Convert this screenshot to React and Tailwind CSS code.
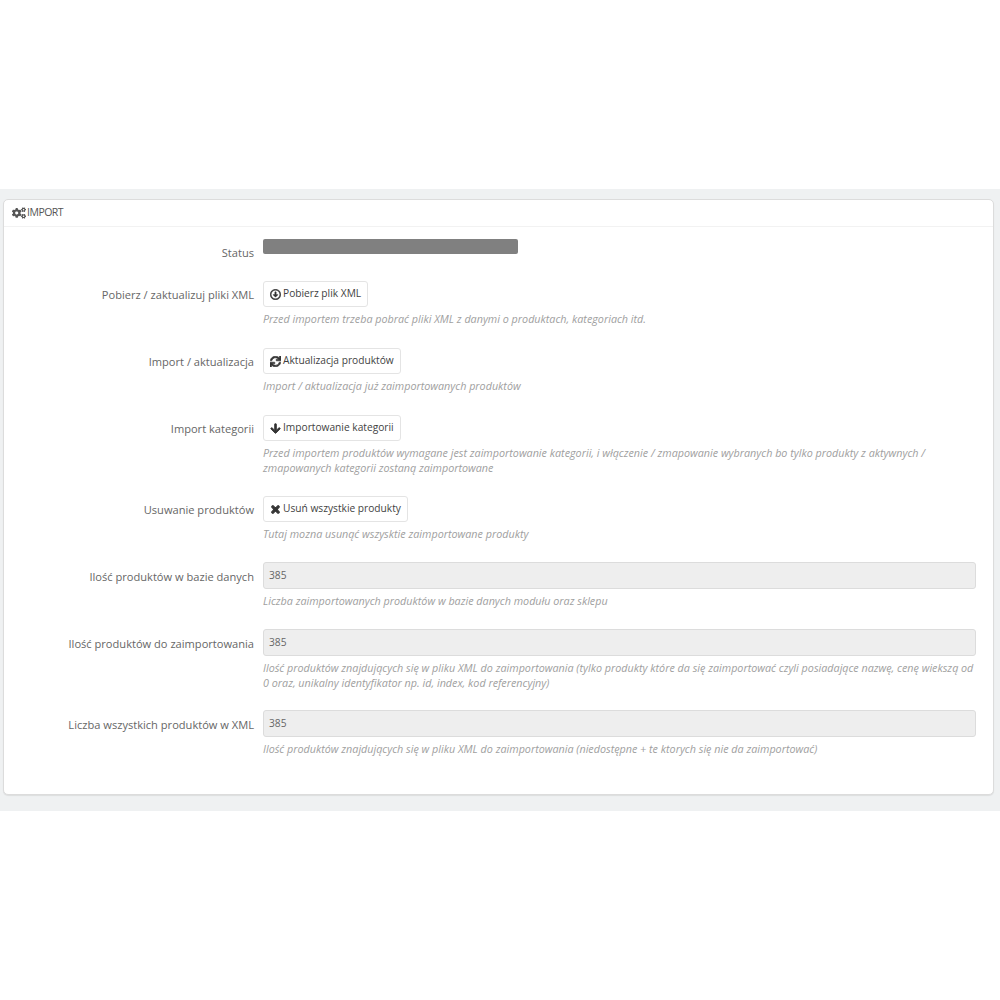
import { FaCogs, FaRegArrowAltCircleDown, FaSync, FaArrowDown, FaTimes } from 'react-icons/fa';

function Row({ label, labelClass = '', help, className = '', children }) {
  return (
    <div className={`flex ${className}`}>
      <label className={`w-[250px] shrink-0 text-right text-[11.1px] leading-[16px] text-[#666] ${labelClass}`}>{label}</label>
      <div className="ml-[9px] flex-1">
        {children}
        {help && <p className="mt-[4px] text-[10.78px] leading-[15px] italic text-[#a0a0a0]">{help}</p>}
      </div>
    </div>
  );
}

function ActionButton({ icon, children }) {
  return (
    <button className="flex h-[26px] items-center gap-[2px] rounded-[3px] border border-[#e4e4e4] bg-white px-[6px] text-[10.2px] text-[#3f3f3f]">
      {icon}
      {children}
    </button>
  );
}

function ReadonlyInput() {
  return (
    <div className="flex h-[27px] items-center rounded-[3px] border border-[#dcdcdc] bg-[#eeeeee] px-[5px] text-[10.2px] text-[#666]">
      385
    </div>
  );
}

export default function App() {
  return (
    <div className="min-h-screen bg-white pt-[189px] font-['Open_Sans',sans-serif]">
      <div className="bg-[#eff1f2] pt-[10px] pr-[6px] pb-[16px] pl-[3px]">
        <div className="h-[596px] rounded-[5px] border border-[#dcdcdc] bg-white shadow-[0_1px_1px_rgba(0,0,0,0.08)]">
          <div className="flex h-[27px] items-center gap-[1px] border-b border-[#f2f2f2] pl-[8px] text-[10.5px] tracking-[-0.5px] text-[#555]">
            <FaCogs className="h-[14px] w-[14px] text-[#555]" />
            <span>IMPORT</span>
          </div>

          <Row label="Status" labelClass="pt-[6px]" className="mt-[12px] h-[22px]">
            <div className="h-[15px] w-[255px] rounded-[2px] bg-[#808080]" />
          </Row>

          <Row
            label="Pobierz / zaktualizuj pliki XML"
            labelClass="pt-[6px]"
            className="mt-[20px]"
            help="Przed importem trzeba pobrać pliki XML z danymi o produktach, kategoriach itd."
          >
            <div className="inline-block">
              <ActionButton icon={<FaRegArrowAltCircleDown className="h-[11px] w-[11px] text-[#333]" stroke="currentColor" strokeWidth="20" />}>Pobierz plik XML</ActionButton>
            </div>
          </Row>

          <Row
            label="Import / aktualizacja"
            labelClass="pt-[6px]"
            className="mt-[22px]"
            help="Import / aktualizacja już zaimportowanych produktów"
          >
            <div className="inline-block">
              <ActionButton icon={<FaSync className="h-[11px] w-[11px] text-[#333]" stroke="currentColor" strokeWidth="30" />}>Aktualizacja produktów</ActionButton>
            </div>
          </Row>

          <Row
            label="Import kategorii"
            labelClass="pt-[6px]"
            className="mt-[22px]"
            help={
              <>
                Przed importem produktów wymagane jest zaimportowanie kategorii, i włączenie / zmapowanie wybranych bo tylko produkty z aktywnych /
                <br />
                zmapowanych kategorii zostaną zaimportowane
              </>
            }
          >
            <div className="inline-block">
              <ActionButton icon={<FaArrowDown className="h-[11px] w-[11px] text-[#333]" stroke="currentColor" strokeWidth="40" />}>Importowanie kategorii</ActionButton>
            </div>
          </Row>

          <Row
            label="Usuwanie produktów"
            labelClass="pt-[6px]"
            className="mt-[21px]"
            help="Tutaj mozna usunąć wszysktie zaimportowane produkty"
          >
            <div className="inline-block">
              <ActionButton icon={<FaTimes className="h-[11px] w-[11px] text-[#333]" stroke="currentColor" strokeWidth="50" />}>Usuń wszystkie produkty</ActionButton>
            </div>
          </Row>

          <Row
            label="Ilość produktów w bazie danych"
            labelClass="pt-[7px]"
            className="mt-[21px] pr-[17px]"
            help="Liczba zaimportowanych produktów w bazie danych modułu oraz sklepu"
          >
            <ReadonlyInput />
          </Row>

          <Row
            label="Ilość produktów do zaimportowania"
            labelClass="pt-[7px]"
            className="mt-[21px] pr-[17px]"
            help={
              <>
                Ilość produktów znajdujących się w pliku XML do zaimportowania (tylko produkty które da się zaimportować czyli posiadające nazwę, cenę wiekszą od
                <br />
                0 oraz, unikalny identyfikator np. id, index, kod referencyjny)
              </>
            }
          >
            <ReadonlyInput />
          </Row>

          <Row
            label="Liczba wszystkich produktów w XML"
            labelClass="pt-[7px]"
            className="mt-[20px] pr-[17px]"
            help="Ilość produktów znajdujących się w pliku XML do zaimportowania (niedostępne + te ktorych się nie da zaimportować)"
          >
            <ReadonlyInput />
          </Row>
        </div>
      </div>
    </div>
  );
}
